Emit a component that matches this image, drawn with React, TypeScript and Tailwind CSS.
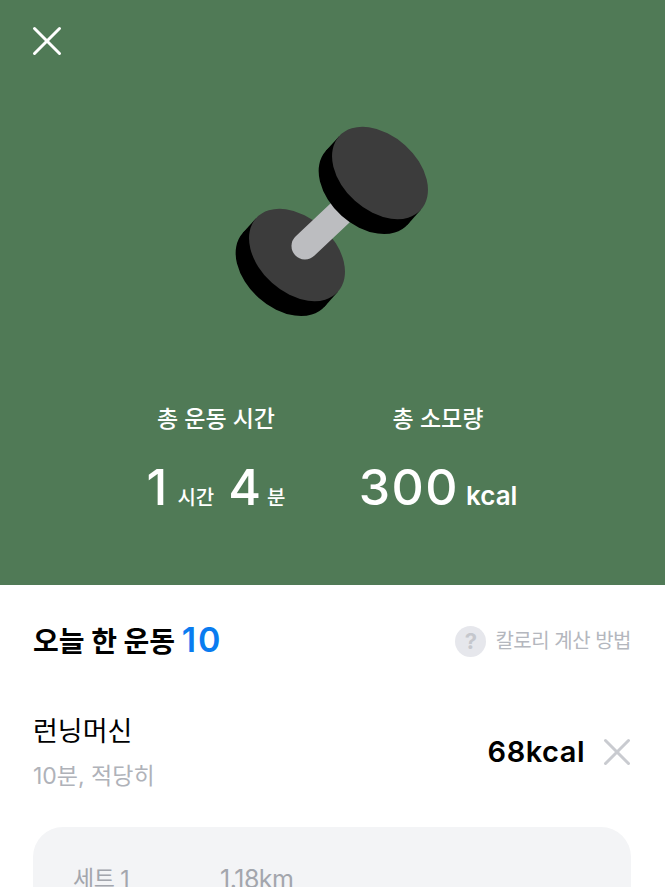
// Workout summary screen: green hero with totals, then today's exercise list.
import { X } from "lucide-react";

const KR = "font-['Inter','Noto_Sans_CJK_KR',sans-serif]";

function Plate({ x, y }: { x: number; y: number }) {
  // side wall is the hull between the face and its copy pushed down-left
  return (
    <g transform={`translate(${x} ${y}) rotate(42)`}>
      <ellipse cx="0" cy="20" rx="55" ry="37.5" fill="#000" />
      <rect x="-55" y="0" width="110" height="20" fill="#000" />
      <ellipse cx="0" cy="0" rx="55" ry="37.5" fill="#3c3c3c" />
    </g>
  );
}

function Dumbbell() {
  return (
    <svg width="200" height="200" viewBox="0 0 200 200" className="mt-[54px] ml-[232px] block">
      {/* viewBox origin sits at page (232,122) */}
      <Plate x={65} y={133} />
      <path d="M73 124 L108 91" stroke="#bcbdc0" strokeWidth="27" strokeLinecap="round" />
      <Plate x={148} y={51} />
    </svg>
  );
}

function Stats() {
  return (
    <div className="mt-[81px] flex text-white">
      <div className="ml-[148px] w-[136px] flex flex-col items-center">
        <div className="text-[23px] leading-[32px] font-medium whitespace-nowrap">총 운동 시간</div>
        <div className="mt-[29px] flex items-baseline h-[46px] whitespace-nowrap">
          <span className="text-[50px] leading-[46px] font-medium">1</span>
          <span className="ml-[10px] text-[20px] font-medium">시간</span>
          <span className="ml-[14px] text-[50px] leading-[46px] font-medium">4</span>
          <span className="ml-[6px] text-[20px] font-medium">분</span>
        </div>
      </div>
      <div className="ml-[75px] w-[158px] flex flex-col items-center">
        <div className="text-[23px] leading-[32px] font-medium whitespace-nowrap">총 소모량</div>
        <div className="mt-[29px] flex items-baseline h-[46px] whitespace-nowrap">
          <span className="text-[50px] leading-[46px] font-medium tracking-[1.5px]">300</span>
          <span className="ml-[7px] text-[26px] font-semibold">kcal</span>
        </div>
      </div>
    </div>
  );
}

export default function App() {
  return (
    <div className={`w-[665px] h-[887px] overflow-hidden bg-white ${KR}`}>
      <section className="h-[585px] bg-[#507a56] relative">
        <X className="absolute left-[22px] top-[16px] text-white" size={50} strokeWidth={3} absoluteStrokeWidth />
        <div className="pt-[68px]">
          <Dumbbell />
          <Stats />
        </div>
      </section>

      <section className="pl-[33px] pr-[34px]">
        <div className="pt-[37px] flex items-center justify-between h-[75px]">
          <h1 className="text-[28px] leading-[36px] font-bold text-black whitespace-nowrap">
            오늘 한 운동 <span className="text-[34px] font-semibold tracking-[2px] text-[#0a7cf0]">10</span>
          </h1>
          <div className="flex items-center">
            <span className="w-[31px] h-[31px] rounded-full bg-[#e6e7ec] text-[#c5c7cd] text-[22px] font-bold flex items-center justify-center">?</span>
            <span className="ml-[9px] text-[20px] tracking-[-0.5px] text-[#b4b7be]">칼로리 계산 방법</span>
          </div>
        </div>

        <div className="mt-[52px] flex items-center justify-between">
          <div>
            <div className="text-[27px] leading-[40px] text-black">런닝머신</div>
            <div className="mt-[8px] text-[23px] leading-[32px] text-[#afb2b9]">10분, 적당히</div>
          </div>
          <div className="flex items-center">
            <span className="text-[29px] font-semibold tracking-[0.5px] text-black">68kcal</span>
            <X className="ml-[9px] -mr-[9px] text-[#c9cbd0]" size={46} strokeWidth={3} absoluteStrokeWidth />
          </div>
        </div>

        <div className="mt-[35px] h-[120px] rounded-[30px] bg-[#f3f4f6] px-[40px] pt-[38px] flex text-[23px] leading-[28px] tracking-[-0.5px] text-[#a3a6ad]">
          <span className="w-[147px]">세트 1</span>
          <span className="text-[25px]">1.18km</span>
        </div>
      </section>
    </div>
  );
}
